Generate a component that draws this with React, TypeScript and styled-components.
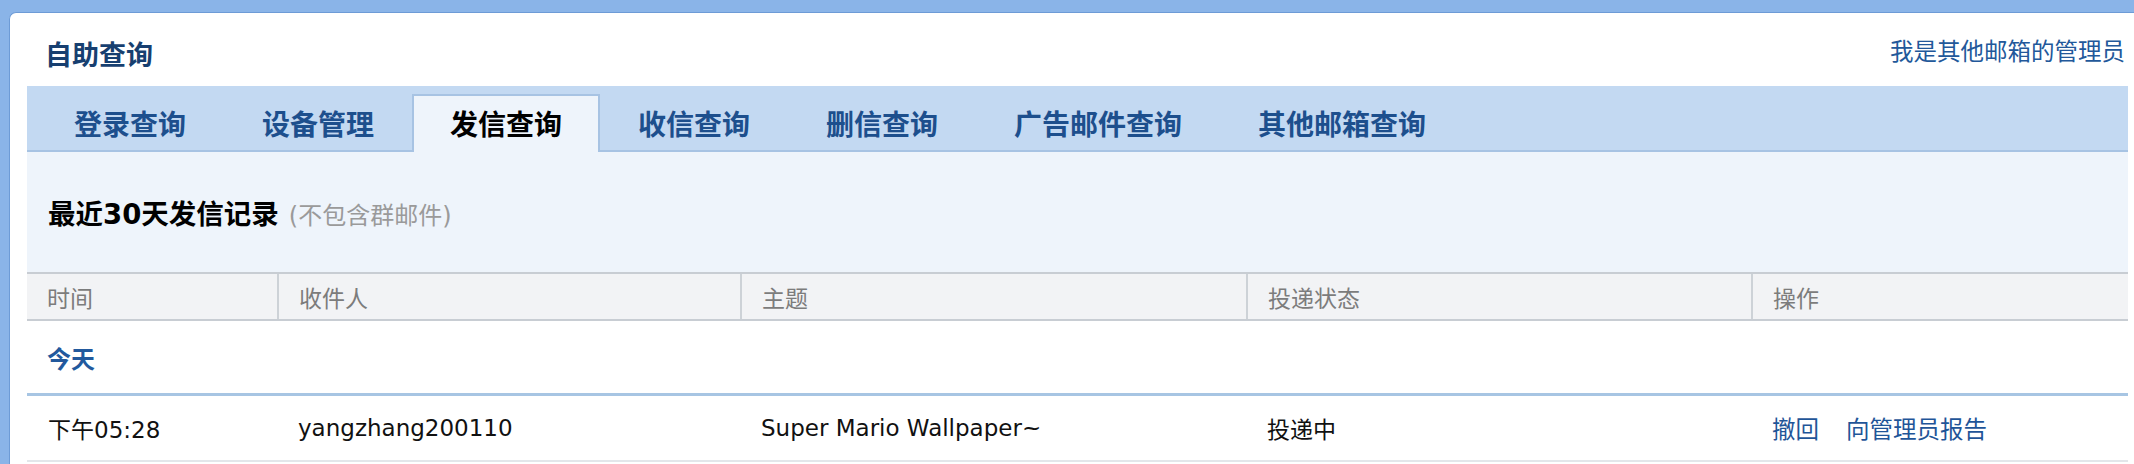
import React from "react";
import styled, { createGlobalStyle } from "styled-components";

const GlobalStyle = createGlobalStyle`
  html, body {
    margin: 0;
    padding: 0;
    background: #8ab4e8;
  }
  body {
    font-family: "DejaVu Sans", "Noto Sans CJK SC", sans-serif;
  }
  * { box-sizing: border-box; }
`;

const Frame = styled.div`
  min-height: 464px;
  padding: 12px 0 0 9px;
  background: #8ab4e8;
`;

const Panel = styled.div`
  min-height: 452px;
  background: #ffffff;
  border-top: 1px solid #6d9bd6;
  border-left: 1px solid #6d9bd6;
  border-top-left-radius: 7px;
  padding: 0 6px 0 17px;
`;

const TitleRow = styled.div`
  display: flex;
  justify-content: space-between;
  align-items: flex-start;
  height: 73px;
  padding: 0 3px 0 18px;
`;

const Title = styled.h1`
  margin: 27px 0 0;
  font-size: 27px;
  line-height: 32px;
  font-weight: 700;
  color: #173f70;
`;

const AdminLink = styled.a`
  margin-top: 23px;
  font-size: 23.5px;
  line-height: 32px;
  color: #22589a;
  text-decoration: none;
  cursor: pointer;
`;

const TabBar = styled.div`
  display: flex;
  align-items: flex-end;
  height: 66px;
  padding: 8px 0 0 9px;
  background: #c3d9f2;
  border-bottom: 2px solid #a7c3e3;
`;

const Tab = styled.div<{ $active?: boolean }>`
  display: flex;
  align-items: center;
  height: ${(p) => (p.$active ? "58px" : "56px")};
  margin-bottom: ${(p) => (p.$active ? "-2px" : "0")};
  padding: 0 36px ${(p) => (p.$active ? "2px" : "0")};
  border: 2px solid ${(p) => (p.$active ? "#a7c3e3" : "transparent")};
  border-bottom: none;
  background: ${(p) => (p.$active ? "#eef4fb" : "transparent")};
  font-family: "Noto Sans CJK SC", sans-serif;
  font-size: 28px;
  font-weight: 700;
  color: ${(p) => (p.$active ? "#000000" : "#1d4f8d")};
  white-space: nowrap;
  cursor: pointer;
`;

const SectionHead = styled.div`
  display: flex;
  align-items: baseline;
  height: 120px;
  padding: 44px 0 0 21px;
  background: #eef4fb;
`;

const Heading = styled.h2`
  margin: 0;
  font-size: 27.5px;
  line-height: 36px;
  font-weight: 700;
  color: #000000;
`;

const Note = styled.span`
  margin-left: 10px;
  font-size: 24px;
  color: #9a9a9a;
`;

const cols = "250px 463px 506px 505px 1fr";

const HeadRow = styled.div`
  display: grid;
  grid-template-columns: ${cols};
  height: 49px;
  background: #f2f3f5;
  border-top: 2px solid #c8cdd3;
  border-bottom: 2px solid #c8cdd3;
`;

const HeadCell = styled.div<{ $first?: boolean }>`
  display: flex;
  align-items: center;
  padding-left: 20px;
  border-left: ${(p) => (p.$first ? "none" : "2px solid #cdd2d7")};
  font-size: 23px;
  color: #7c7c7c;
`;

const GroupRow = styled.div`
  display: flex;
  align-items: center;
  height: 75px;
  padding-left: 20px;
  border-bottom: 3px solid #a7c5e3;
  font-family: "Noto Sans CJK SC", sans-serif;
  font-size: 24px;
  font-weight: 700;
  color: #22599d;
`;

const DataRow = styled.div`
  display: grid;
  grid-template-columns: ${cols};
  height: 66px;
  border-bottom: 2px solid #e3e6ea;
`;

const Cell = styled.div`
  display: flex;
  align-items: center;
  gap: 27px;
  padding-left: 21px;
  font-size: 23px;
  color: #111111;
  white-space: nowrap;
`;

const ActionLink = styled.a`
  font-size: 23.5px;
  color: #1f5598;
  text-decoration: none;
  cursor: pointer;
`;

const tabs = ["登录查询", "设备管理", "发信查询", "收信查询", "删信查询", "广告邮件查询", "其他邮箱查询"];
const headers = ["时间", "收件人", "主题", "投递状态", "操作"];

export default function App() {
  return (
    <>
      <GlobalStyle />
      <Frame>
        <Panel>
          <TitleRow>
            <Title>自助查询</Title>
            <AdminLink>我是其他邮箱的管理员</AdminLink>
          </TitleRow>
          <TabBar>
            {tabs.map((t) => (
              <Tab key={t} $active={t === "发信查询"}>
                {t}
              </Tab>
            ))}
          </TabBar>
          <SectionHead>
            <Heading>最近30天发信记录</Heading>
            <Note>(不包含群邮件)</Note>
          </SectionHead>
          <HeadRow>
            {headers.map((h, i) => (
              <HeadCell key={h} $first={i === 0}>
                {h}
              </HeadCell>
            ))}
          </HeadRow>
          <GroupRow>今天</GroupRow>
          <DataRow>
            <Cell>下午05:28</Cell>
            <Cell>yangzhang200110</Cell>
            <Cell>Super Mario Wallpaper~</Cell>
            <Cell>投递中</Cell>
            <Cell>
              <ActionLink>撤回</ActionLink>
              <ActionLink>向管理员报告</ActionLink>
            </Cell>
          </DataRow>
        </Panel>
      </Frame>
    </>
  );
}
